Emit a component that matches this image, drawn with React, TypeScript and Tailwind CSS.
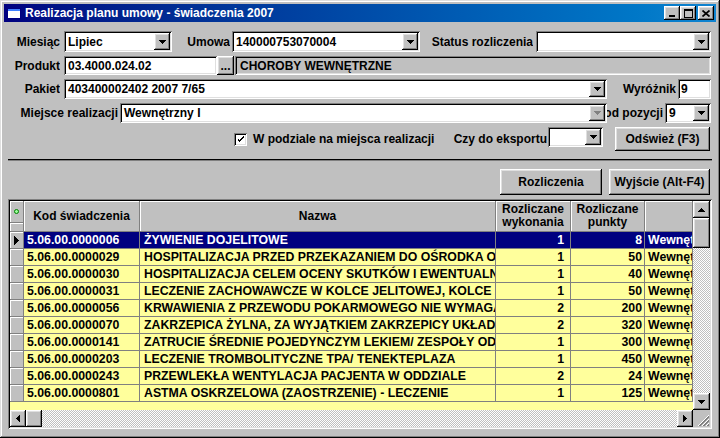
import React from 'react';

const raised =
  'bg-[#c0c0c0] shadow-[inset_-1px_-1px_0_#000,inset_1px_1px_0_#fff,inset_-2px_-2px_0_#808080,inset_2px_2px_0_#dfdfdf]';
const sunken =
  'shadow-[inset_1px_1px_0_#808080,inset_-1px_-1px_0_#fff,inset_2px_2px_0_#000,inset_-2px_-2px_0_#dfdfdf]';
const dither =
  '[background-image:repeating-conic-gradient(#c0c0c0_0%_25%,#ffffff_0%_50%)] [background-size:2px_2px]';

type Dir = 'up' | 'down' | 'left' | 'right';

function Arrow({ dir, disabled }: { dir: Dir; disabled?: boolean }) {
  const fill = disabled ? '#808080' : '#000';
  const steps = [0, 1, 2, 3];
  if (dir === 'up' || dir === 'down') {
    return (
      <svg width="7" height="4" viewBox="0 0 7 4" shapeRendering="crispEdges">
        {steps.map((i) => (
          <rect key={i} x={i} y={dir === 'down' ? i : 3 - i} width={7 - i * 2} height="1" fill={fill} />
        ))}
      </svg>
    );
  }
  return (
    <svg width="4" height="7" viewBox="0 0 4 7" shapeRendering="crispEdges">
      {steps.map((i) => (
        <rect key={i} x={dir === 'right' ? i : 3 - i} y={i} width="1" height={7 - i * 2} fill={fill} />
      ))}
    </svg>
  );
}

function DropBtn({ disabled }: { disabled?: boolean }) {
  return (
    <div className={`flex h-full w-[16px] shrink-0 items-center justify-center ${raised}`}>
      <Arrow dir="down" disabled={disabled} />
    </div>
  );
}

function Combo({ value, className, disabled }: { value?: string; className: string; disabled?: boolean }) {
  return (
    <div className={`flex shrink-0 items-stretch bg-white p-[2px] ${sunken} ${className}`}>
      <span className="flex flex-1 items-center overflow-hidden whitespace-nowrap pl-[2px]">{value}</span>
      <DropBtn disabled={disabled} />
    </div>
  );
}

function Label({ children, className }: { children: React.ReactNode; className: string }) {
  return (
    <div className={`flex shrink-0 justify-end overflow-hidden ${className}`}>
      <span className="shrink-0 whitespace-nowrap">{children}</span>
    </div>
  );
}

const rows = [
  ['5.06.00.0000006', 'ŻYWIENIE DOJELITOWE', '1', '8'],
  ['5.06.00.0000029', 'HOSPITALIZACJA PRZED PRZEKAZANIEM DO OŚRODKA O WYŻSZYM STOPNIU REFERENCYJNOŚCI', '1', '50'],
  ['5.06.00.0000030', 'HOSPITALIZACJA CELEM OCENY SKUTKÓW I EWENTUALNEGO LECZENIA', '1', '40'],
  ['5.06.00.0000031', 'LECZENIE ZACHOWAWCZE W KOLCE JELITOWEJ, KOLCE ŻÓŁCIOWEJ', '1', '50'],
  ['5.06.00.0000056', 'KRWAWIENIA Z PRZEWODU POKARMOWEGO NIE WYMAGAJĄCE TRANSFUZJI', '2', '200'],
  ['5.06.00.0000070', 'ZAKRZEPICA ŻYLNA, ZA WYJĄTKIEM ZAKRZEPICY UKŁADU WROTNEGO', '2', '320'],
  ['5.06.00.0000141', 'ZATRUCIE ŚREDNIE POJEDYNCZYM LEKIEM/ ZESPOŁY ODSTAWIENNE', '1', '300'],
  ['5.06.00.0000203', 'LECZENIE TROMBOLITYCZNE TPA/ TENEKTEPLAZA', '1', '450'],
  ['5.06.00.0000243', 'PRZEWLEKŁA WENTYLACJA PACJENTA W ODDZIALE', '2', '24'],
  ['5.06.00.0000801', 'ASTMA OSKRZELOWA (ZAOSTRZENIE) - LECZENIE', '1', '125'],
];

const cell = 'h-full overflow-hidden whitespace-nowrap border-r border-b border-[#808080] leading-[16px]';
const head =
  'flex h-full items-center justify-center border-r border-b border-[#808080] bg-[#c0c0c0] text-center leading-[13px] shadow-[inset_1px_1px_0_#fff]';

function TitleButton({ children, className = '' }: { children: React.ReactNode; className?: string }) {
  return (
    <div className={`flex h-[14px] w-[16px] items-center justify-center ${raised} ${className}`}>{children}</div>
  );
}

export default function App() {
  return (
    <div className="h-[438px] w-[720px] bg-[#c0c0c0] p-[4px] font-['Liberation_Sans',Arial,sans-serif] text-[12px] font-bold text-black shadow-[inset_-1px_-1px_0_#000,inset_1px_1px_0_#dfdfdf,inset_-2px_-2px_0_#808080,inset_2px_2px_0_#fff]">
      {/* title bar */}
      <div className="flex h-[18px] items-center bg-gradient-to-r from-[#000080] to-[#1084d0] pl-[3px] pr-[2px]">
        <svg width="14" height="11" viewBox="0 0 14 11" shapeRendering="crispEdges">
          <rect x="0" y="0" width="14" height="11" fill="#000080" />
          <rect x="1" y="1" width="12" height="2" fill="#4080ff" />
          <rect x="1" y="3" width="12" height="7" fill="#fff" />
        </svg>
        <span className="ml-[4px] text-[12px] font-bold text-white">Realizacja planu umowy - świadczenia 2007</span>
        <div className="ml-auto flex items-center">
          <TitleButton>
            <svg width="8" height="7" viewBox="0 0 8 7" shapeRendering="crispEdges">
              <rect x="1" y="5" width="6" height="2" fill="#000" />
            </svg>
          </TitleButton>
          <TitleButton>
            <svg width="9" height="9" viewBox="0 0 9 9" shapeRendering="crispEdges">
              <rect x="0" y="0" width="9" height="2" fill="#000" />
              <rect x="0" y="0" width="1" height="9" fill="#000" />
              <rect x="8" y="0" width="1" height="9" fill="#000" />
              <rect x="0" y="8" width="9" height="1" fill="#000" />
            </svg>
          </TitleButton>
          <TitleButton className="ml-[2px]">
            <svg width="8" height="7" viewBox="0 0 8 7">
              <path d="M0.5 0.5 L7.5 6.5 M7.5 0.5 L0.5 6.5" stroke="#000" strokeWidth="1.7" />
            </svg>
          </TitleButton>
        </div>
      </div>

      {/* row 1 */}
      <div className="mt-[9px] flex h-[21px] items-center">
        <Label className="w-[56px]">Miesiąc</Label>
        <Combo value="Lipiec" className="ml-[4px] h-full w-[108px]" />
        <Label className="w-[58px]">Umowa</Label>
        <Combo value="140000753070004" className="ml-[2px] h-full w-[188px]" />
        <Label className="w-[113px]">Status rozliczenia</Label>
        <Combo className="ml-[3px] h-full w-[175px]" />
      </div>

      {/* row 2 */}
      <div className="mt-[4px] flex h-[19px] items-center">
        <Label className="w-[56px]">Produkt</Label>
        <div className={`ml-[4px] flex h-full w-[153px] items-center bg-white pl-[4px] ${sunken}`}>03.4000.024.02</div>
        <div className={`flex h-full w-[17px] items-end justify-center pb-[3px] leading-none ${raised}`}>...</div>
        <div className={`ml-[1px] flex h-full w-[476px] items-center bg-[#c0c0c0] pl-[5px] ${sunken}`}>
          CHOROBY WEWNĘTRZNE
        </div>
      </div>

      {/* row 3 */}
      <div className="mt-[4px] flex h-[20px] items-center">
        <Label className="w-[56px]">Pakiet</Label>
        <Combo value="403400002402 2007 7/65" className="ml-[4px] h-full w-[543px]" />
        <Label className="w-[69px]">Wyróżnik</Label>
        <div className={`ml-[2px] flex h-full w-[33px] items-center bg-white pl-[3px] ${sunken}`}>9</div>
      </div>

      {/* row 4 */}
      <div className="mt-[4px] flex h-[20px] items-center">
        <Label className="w-[114px]">Miejsce realizacji</Label>
        <Combo value="Wewnętrzny I" className="ml-[2px] h-full w-[487px]" disabled />
        <Label className="w-[56px]">od pozycji</Label>
        <Combo value="9" className="ml-[2px] h-full w-[46px]" />
      </div>

      {/* row 5 */}
      <div className="mt-[4px] flex h-[24px] items-center pr-[6px]">
        <div className={`ml-[230px] flex h-[13px] w-[13px] items-center justify-center bg-white ${sunken}`}>
          <svg width="7" height="7" viewBox="0 0 7 7" shapeRendering="crispEdges">
            <path d="M0 2h1v3h1v1h1v-1h1v-1h1v-1h1v-1h1v-2h-1v1h-1v1h-1v1h-1v1h-1v-1h-1v-1h-1z" fill="#000" />
          </svg>
        </div>
        <span className="ml-[6px] whitespace-nowrap">W podziale na miejsca realizacji</span>
        <div className="ml-auto flex h-full items-center">
          <span className="whitespace-nowrap">Czy do eksportu</span>
          <Combo className="ml-[1px] h-[20px] w-[55px] self-start" />
          <div className={`ml-[12px] flex h-[24px] w-[95px] items-center justify-center ${raised}`}>Odśwież (F3)</div>
        </div>
      </div>

      {/* separator */}
      <div className="mx-[4px] mt-[8px] h-[2px] border-t border-b border-t-black border-b-[#808080]" />

      {/* row 6 */}
      <div className="mt-[8px] flex h-[26px] justify-end pr-[6px]">
        <div className={`flex w-[102px] items-center justify-center ${raised}`}>Rozliczenia</div>
        <div className={`ml-[7px] flex w-[101px] items-center justify-center ${raised}`}>Wyjście (Alt-F4)</div>
      </div>

      {/* grid */}
      <div className={`mx-[4px] mt-[4px] flex h-[230px] bg-[#c0c0c0] p-[2px] ${sunken}`}>
        <div className="flex w-[683px] flex-col">
          <div className="flex h-[31px]">
            <div className="flex h-full w-[14px] flex-col border-r border-[#808080]">
              <div className="flex h-[22px] items-center justify-center border-b border-[#808080] shadow-[inset_1px_1px_0_#fff]">
                <div className="h-[5px] w-[5px] rounded-full border border-[#008000] bg-[#9cff9c]" />
              </div>
              <div className="flex-1 border-b border-[#808080] shadow-[inset_1px_1px_0_#fff]" />
            </div>
            <div className={`${head} w-[116px]`}>Kod świadczenia</div>
            <div className={`${head} w-[356px]`}>Nazwa</div>
            <div className={`${head} w-[75px]`}>
              Rozliczane
              <br />
              wykonania
            </div>
            <div className={`${head} w-[74px]`}>
              Rozliczane
              <br />
              punkty
            </div>
            <div className={`${head} w-[48px]`} />
          </div>
          {rows.map(([code, name, wyk, pkt], i) => {
            const sel = i === 0;
            return (
              <div
                key={code}
                className={`flex h-[17px] text-[12.3px] ${sel ? 'bg-[#000080] text-white' : 'bg-[#ffff9c] text-black'}`}
              >
                <div className="flex h-full w-[14px] items-center justify-center border-r border-b border-[#808080] bg-[#c0c0c0] shadow-[inset_1px_1px_0_#fff]">
                  {sel && (
                    <svg width="5" height="9" viewBox="0 0 5 9" shapeRendering="crispEdges">
                      {[0, 1, 2, 3, 4].map((k) => (
                        <rect key={k} x={k} y={k} width="1" height={9 - k * 2} fill="#000" />
                      ))}
                    </svg>
                  )}
                </div>
                <div className={`${cell} w-[116px] pl-[3px]`}>{code}</div>
                <div className={`${cell} w-[356px] pl-[4px]`}>{name}</div>
                <div className={`${cell} w-[75px] pr-[6px] text-right`}>{wyk}</div>
                <div className={`${cell} w-[74px] pr-[2px] text-right`}>{pkt}</div>
                <div className={`${cell} w-[48px] pl-[3px]`}>Wewnętrzny I</div>
              </div>
            );
          })}
          <div className="flex-1 bg-[#ffff9c]" />
          <div className="flex h-[17px]">
            <div className={`flex w-[16px] items-center justify-center ${raised}`}>
              <Arrow dir="left" />
            </div>
            <div className={`w-[16px] ${raised}`} />
            <div className={`flex-1 ${dither}`} />
            <div className={`flex w-[16px] items-center justify-center ${raised}`}>
              <Arrow dir="right" />
            </div>
          </div>
        </div>
        <div className="flex w-[17px] flex-col">
          <div className={`flex h-[17px] items-center justify-center ${raised}`}>
            <Arrow dir="up" />
          </div>
          <div className={`h-[30px] ${raised}`} />
          <div className={`flex-1 ${dither}`} />
          <div className={`flex h-[17px] items-center justify-center ${raised}`}>
            <Arrow dir="down" />
          </div>
          <div className="flex h-[17px] items-end justify-end bg-[#c0c0c0] p-[1px]">
            <svg width="12" height="12" viewBox="0 0 12 12" shapeRendering="crispEdges">
              {[0, 4, 8].map((o) => (
                <g key={o}>
                  <path d={`M${o + 1} 12 L12 ${o + 1}`} stroke="#fff" strokeWidth="1" />
                  <path d={`M${o + 2} 12 L12 ${o + 2}`} stroke="#808080" strokeWidth="1" />
                  <path d={`M${o + 3} 12 L12 ${o + 3}`} stroke="#808080" strokeWidth="1" />
                </g>
              ))}
            </svg>
          </div>
        </div>
      </div>
    </div>
  );
}
